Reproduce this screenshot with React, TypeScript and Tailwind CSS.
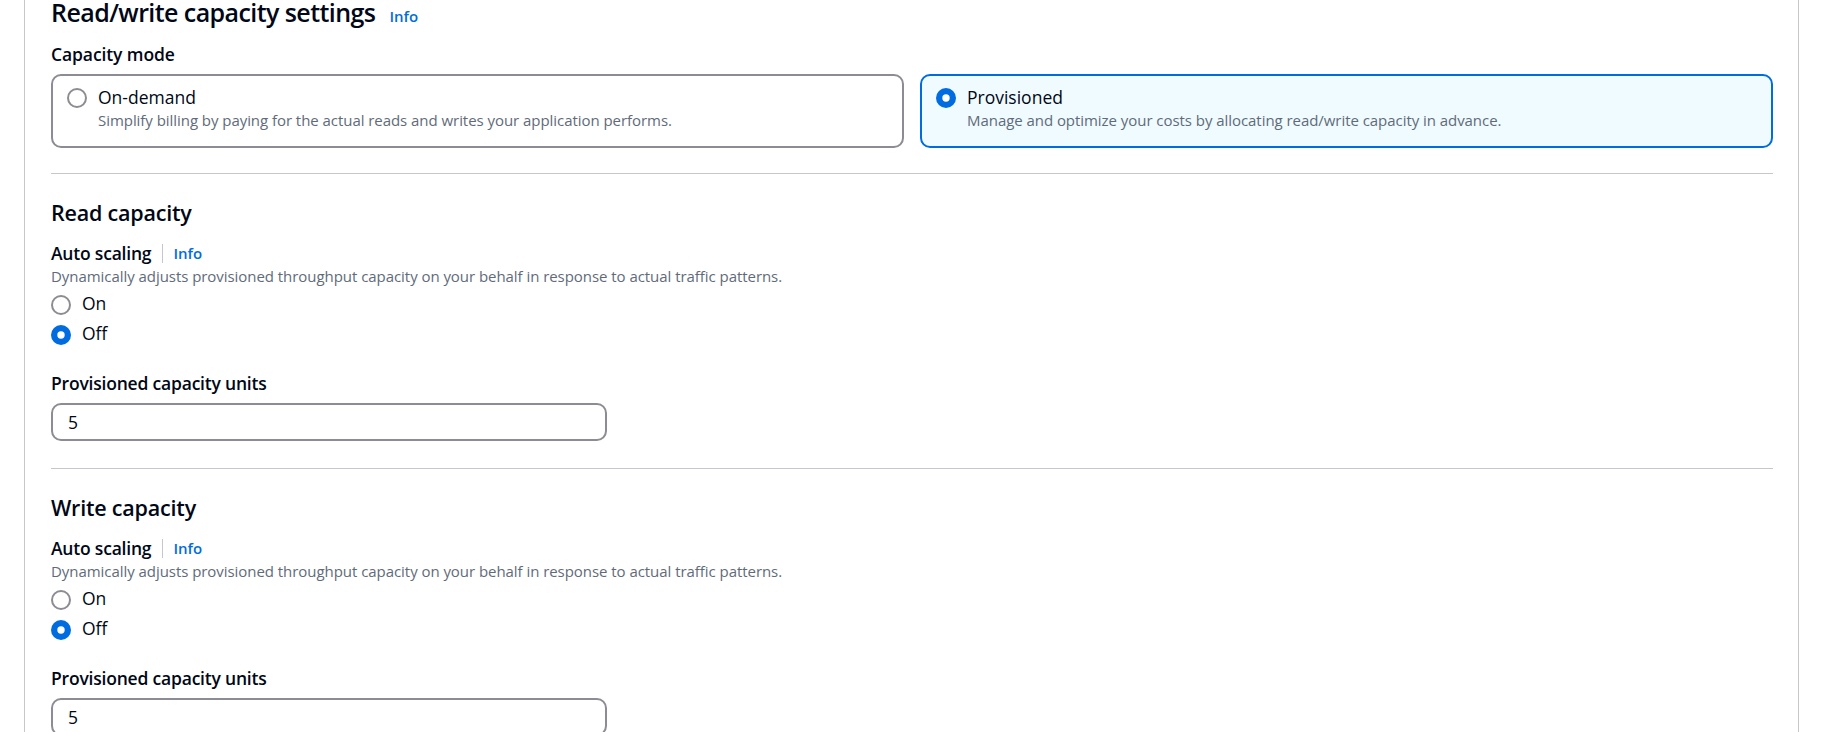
import React from 'react';

function Radio({ checked }: { checked?: boolean }) {
  if (checked) {
    return (
      <svg className="h-[20px] w-[20px] shrink-0" viewBox="0 0 20 20">
        <circle cx="10" cy="10" r="10" fill="#006ce0" />
        <circle cx="10" cy="10" r="3.7" fill="#ffffff" />
      </svg>
    );
  }
  return <span className="block h-[20px] w-[20px] shrink-0 rounded-full border-2 border-[#8c8c94] bg-white" />;
}

function Tile({ label, description, checked }: { label: string; description: string; checked?: boolean }) {
  return (
    <div
      className={
        checked
          ? 'flex gap-[11px] rounded-[10px] border-2 border-[#006ce0] bg-[#f0fbff] pt-[9px] pb-[16px] pl-[14px] pr-[14px]'
          : 'flex gap-[11px] rounded-[10px] border-2 border-[#8c8c94] bg-white pt-[9px] pb-[16px] pl-[14px] pr-[14px]'
      }
    >
      <div className="mt-[3px]">
        <Radio checked={checked} />
      </div>
      <div>
        <div className="text-[17.5px] leading-[25px]">{label}</div>
        <div className="text-[15px] leading-[20px] tracking-[-0.05px] text-[#5f6b7a]">{description}</div>
      </div>
    </div>
  );
}

function RadioRow({ label, checked }: { label: string; checked?: boolean }) {
  return (
    <div className="flex gap-[11px]">
      <div className="mt-[4px]">
        <Radio checked={checked} />
      </div>
      <span className="text-[17.5px] leading-[25px]">{label}</span>
    </div>
  );
}

function CapacitySection({ title }: { title: string }) {
  return (
    <section className="pt-[25px]">
      <h3 className="text-[21.5px] font-semibold leading-[27px] tracking-[-0.2px]">{title}</h3>
      <div className="mt-[15px] flex items-center">
        <span className="text-[17.5px] font-semibold leading-[25px] tracking-[-0.2px]">Auto scaling</span>
        <span className="ml-[11px] mr-[10px] h-[19px] w-px bg-[#c6c6cd]" />
        <a className="text-[15px] font-semibold leading-[25px] text-[#006ce0]">Info</a>
      </div>
      <p className="text-[15px] leading-[20px] tracking-[-0.05px] text-[#5f6b7a]">
        Dynamically adjusts provisioned throughput capacity on your behalf in response to actual traffic patterns.
      </p>
      <div className="mt-[5px] flex flex-col gap-[5px]">
        <RadioRow label="On" />
        <RadioRow label="Off" checked />
      </div>
      <div className="mt-[25px] text-[17.5px] font-semibold leading-[25px] tracking-[-0.2px]">
        Provisioned capacity units
      </div>
      <input
        readOnly
        defaultValue="5"
        className="mt-[7px] block h-[38px] w-[556px] rounded-[10px] border-2 border-[#8c8c94] bg-white px-[15px] text-[17.5px] text-[#000716] outline-none"
      />
    </section>
  );
}

export default function App() {
  return (
    <div className="min-h-screen bg-white px-[24px] font-['Open_Sans',sans-serif] text-[#000716]">
      <div className="border-x border-[#c6c6cd] pl-[26px] pr-[25px] pb-[40px]">
        <h2 className="flex items-baseline text-[25px] font-semibold leading-[24px] tracking-[-0.575px]">
          Read/write capacity settings
          <a className="ml-[14px] text-[15px] font-semibold tracking-normal text-[#006ce0]">Info</a>
        </h2>
        <div className="mt-[14px] text-[17.5px] font-semibold leading-[25px] tracking-[-0.1px]">Capacity mode</div>
        <div className="mt-[7px] grid grid-cols-2 gap-[16px]">
          <Tile
            label="On-demand"
            description="Simplify billing by paying for the actual reads and writes your application performs."
          />
          <Tile
            checked
            label="Provisioned"
            description="Manage and optimize your costs by allocating read/write capacity in advance."
          />
        </div>
        <div className="mt-[25px] h-px bg-[#c6c6cd]" />
        <CapacitySection title="Read capacity" />
        <div className="mt-[27px] h-px bg-[#c6c6cd]" />
        <CapacitySection title="Write capacity" />
      </div>
    </div>
  );
}
